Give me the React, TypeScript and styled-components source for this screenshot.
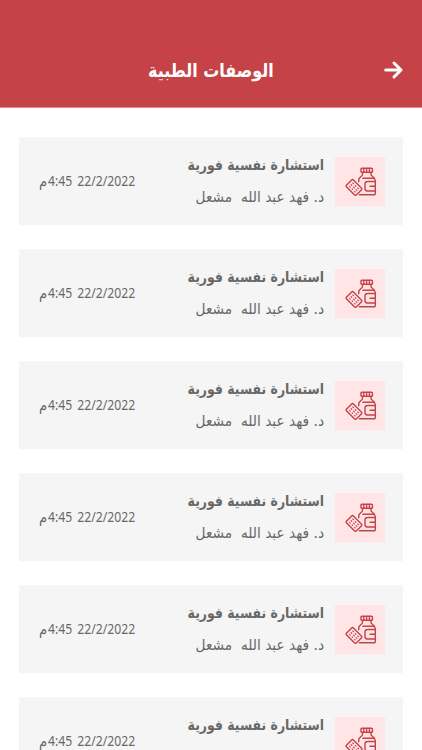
import React from "react";
import styled, { createGlobalStyle } from "styled-components";

const GlobalStyle = createGlobalStyle`
  * { box-sizing: border-box; }
  html, body { margin: 0; height: 100%; background: #fff; overflow: hidden; }
  body { font-family: "DejaVu Sans", sans-serif; color: #686868; }
`;

const Page = styled.main`
  height: 750px;
  overflow: hidden;
`;

const Header = styled.header`
  display: grid;
  grid-template-columns: 20px 1fr 20px;
  align-items: center;
  height: 108px;
  padding: 32px 18px 0;
  color: #fff;
  background: #c54247;
  border-bottom: 1px solid #e8868d;
`;

const Title = styled.h1`
  margin: 0;
  justify-self: center;
  font-size: 19px;
  line-height: 28px;
  font-weight: 700;
  white-space: nowrap;
  transform: scaleX(0.84);
`;

const BackButton = styled.button`
  display: flex;
  padding: 0;
  border: 0;
  color: inherit;
  background: none;
`;

const List = styled.div`
  display: flex;
  flex-direction: column;
  gap: 24px;
  padding: 29px 19px 0;
`;

const Card = styled.article`
  display: flex;
  flex: none;
  align-items: flex-start;
  height: 88px;
  padding: 20px 18px 0 20px;
  background: #f5f5f5;
`;

const IconTile = styled.div`
  display: flex;
  align-items: center;
  justify-content: center;
  width: 50px;
  height: 49px;
  padding-left: 2px;
  background: #ffe5e5;
`;

const Details = styled.div`
  flex: 1;
  height: 56px;
  padding-right: 11px;
`;

const Line = styled.div<{ $bold?: boolean; $scale: number }>`
  height: ${(p) => (p.$bold ? 30 : 26)}px;
  line-height: ${(p) => (p.$bold ? 16 : 21)}px;
  font-size: 15px;
  font-weight: ${(p) => (p.$bold ? 700 : 400)};
  white-space: pre;
  transform: scaleX(${(p) => p.$scale});
  transform-origin: right;
`;

const DateTime = styled.div`
  display: flex;
  direction: ltr;
  gap: 6px;
  width: 112px;
  padding-top: 14px;
  font: 14px/20px "Noto Sans", sans-serif;
  white-space: nowrap;
  transform: scaleX(0.87);
  transform-origin: left;
`;

const Time = styled.span`
  display: flex;
  gap: 1px;
`;

const Period = styled.span`
  font-family: "DejaVu Sans", sans-serif;
  font-size: 15px;
`;

function MedicineIcon() {
  return (
    <svg width="32" height="30" viewBox="0 0 32 30" fill="none" stroke="#c54247" strokeWidth="1.4" strokeLinejoin="round" strokeLinecap="round">
      <rect x="16" y="1.2" width="11.4" height="4" rx="0.8" />
      <path d="M18.8 2.5v2.3M21.6 2.5v2.3M24.4 2.5v2.3M17.5 5.5v2.2c0 1.4-3.8 2.3-3.8 5.5v1.5M26 5.5v2.2c0 1.4 4.3 2.3 4.3 6v12.8a1.3 1.3 0 0 1-1.3 1.3H14.5" />
      <path d="M17.8 11.2h11.5M30 14.5h-7.5q-2.500 0-2.500 2.500v4.500q0 2.500 2.500 2.500H30M25 19.300h5" />
      <g transform="rotate(45 9 20.5)">
        <rect x="2" y="15.6" width="14" height="9.8" rx="1.5" />
        <path strokeWidth="1.2" d="M5 18.2h.8M8.6 18.2h.8M12.2 18.2h.8M5 20.5h.8M8.6 20.5h.8M12.2 20.5h.8M5 22.8h.8M8.6 22.8h.8M12.2 22.8h.8" />
      </g>
    </svg>
  );
}

function PrescriptionCard() {
  return (
    <Card dir="rtl">
      <IconTile><MedicineIcon /></IconTile>
      <Details>
        <Line $bold $scale={0.83}>استشارة نفسية فورية</Line>
        <Line $scale={0.915}>د. فهد عبد الله  مشعل</Line>
      </Details>
      <DateTime>
        <Time><Period>م</Period><span>4:45</span></Time>
        <span>22/2/2022</span>
      </DateTime>
    </Card>
  );
}

export default function App() {
  return (
    <Page>
      <GlobalStyle />
      <Header>
        <span />
        <Title dir="rtl">الوصفات الطبية</Title>
        <BackButton aria-label="رجوع">
          <svg width="20" height="20" viewBox="0 0 20 20" fill="none" stroke="currentColor" strokeWidth="3" strokeLinecap="round" strokeLinejoin="round">
            <path d="M1.7 10H17M10 3l7 7-7 7" />
          </svg>
        </BackButton>
      </Header>
      <List>
        {Array.from({ length: 6 }, (_, i) => <PrescriptionCard key={i} />)}
      </List>
    </Page>
  );
}
